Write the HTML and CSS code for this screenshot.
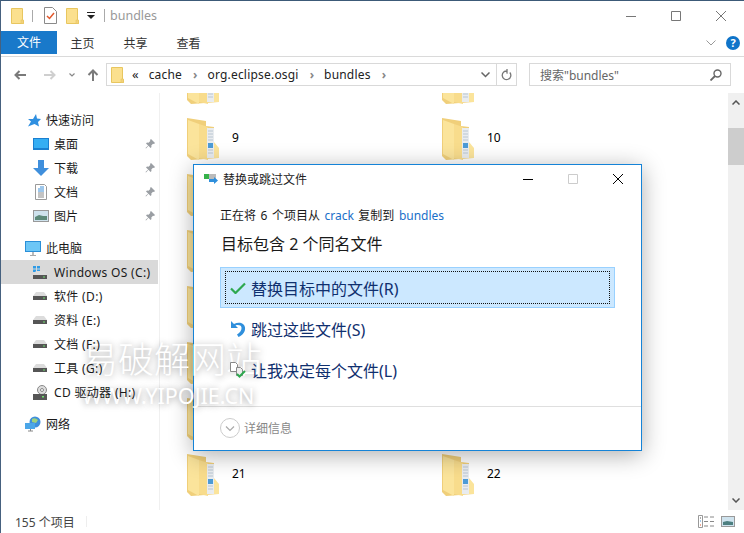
FILE: index.html
```html
<!doctype html>
<html lang="zh-CN">
<head>
	<meta charset="UTF-8">
	<title>bundles</title>
	<link rel="stylesheet" href="styles.css">
</head>
<body>
	<svg class="defs" width="0" height="0">
		<symbol id="folder" viewBox="0 0 32 42">
			<path d="M0 0 L19 3 L19 8 L27 9 L27 31 L32 37 L32 40 L4 42 L0 38Z" fill="#f0cf7a"/>
			<path d="M1 2 L12 6 L12 42 L1 36Z" fill="#fbe49b"/>
			<path d="M12 6 L21 9 L21 42 L12 40Z" fill="#f8dc8c"/>
			<rect x="20" y="10" width="7" height="30" fill="#e9ecef"/>
			<path d="M21 13h5M21 16h5M21 19h5M21 22h5M21 32h5M21 35h5" stroke="#b9c6d2" stroke-width="1"/>
			<rect x="21" y="25" width="5" height="5" fill="#4d9bd6"/>
			<path d="M27 24 L32 30 L32 40 L27 40Z" fill="#fbe49b"/>
		</symbol>
		<symbol id="tiny" viewBox="0 0 13 16">
			<path d="M.5 .5h11v12h1v3H.5z" fill="#fbe08e" stroke="#e8c65f"/>
			<path d="M10 12h2.500v3.500H10z" fill="#f3d27c" stroke="#e8c65f" stroke-width=".6"/>
		</symbol>
		<symbol id="drive" viewBox="0 0 14 8">
			<path d="M3 0h8l3 4v4H0V4z" fill="#dcdcdc"/>
			<path d="M0 4h14v4H0z" fill="#555"/>
			<rect x="10" y="5.500" width="2" height="1" fill="#6fe06f"/>
		</symbol>
		<symbol id="pin" viewBox="0 0 10 10">
			<path d="M6 0l4 4-1 1-1-.3L6.300 6.500 6.500 8 5.500 9 3.500 6.800 1 9.500 .5 9l2.700-2.500L1 4.500l1-1 1.500.2L5.300 2 5 1z" fill="#9a9ea3"/>
		</symbol>
	</svg>

	<div class="window">
		<header class="titlebar">
			<svg class="qa-folder"><use href="#tiny"/></svg>
			<span class="qa-sep"></span>
			<svg class="qa-props" viewBox="0 0 13 17" width="13" height="17">
				<path d="M.5 .5h8l4 4v12H.5z" fill="#fff" stroke="#8a8a8a"/>
				<path d="M3 9l2.500 2.500L10 6" fill="none" stroke="#e2572b" stroke-width="1.500"/>
			</svg>
			<svg class="qa-folder qa-folder-2"><use href="#tiny"/></svg>
			<svg class="qa-drop" viewBox="0 0 8 7" width="8" height="7">
				<path d="M0 0h8v1H0zM0 3h8L4 7z" fill="#222"/>
			</svg>
			<span class="qa-sep qa-sep-2"></span>
			<span class="title-text">bundles</span>
			<div class="win-buttons">
				<svg viewBox="0 0 10 10" width="10" height="10"><path d="M0 5.500h10" stroke="#777"/></svg>
				<svg viewBox="0 0 10 10" width="10" height="10"><path d="M.5 .5h9v9h-9z" fill="none" stroke="#777"/></svg>
				<svg viewBox="0 0 10 10" width="10" height="10"><path d="M0 0l10 10M10 0L0 10" stroke="#777"/></svg>
			</div>
		</header>

		<nav class="tabs">
			<span class="tab tab-file">文件</span>
			<span class="tab">主页</span>
			<span class="tab">共享</span>
			<span class="tab">查看</span>
			<svg class="ribbon-toggle" viewBox="0 0 10 6" width="10" height="6"><path d="M.5 .5L5 5 9.500 .5" fill="none" stroke="#999"/></svg>
			<span class="help">?</span>
		</nav>

		<div class="addressrow">
			<svg class="nav-arrow" viewBox="0 0 12 10" width="12" height="10"><path d="M12 5H2M5.500 1L1.500 5l4 4" fill="none" stroke="#7a7a7a" stroke-width="2"/></svg>
			<svg class="nav-arrow nav-forward" viewBox="0 0 12 10" width="12" height="10"><path d="M0 5h10M6.500 1l4 4-4 4" fill="none" stroke="#cfcfcf" stroke-width="2"/></svg>
			<svg class="nav-recent" viewBox="0 0 6 4" width="6" height="4"><path d="M.5 .5L3 3 5.500 .5" fill="none" stroke="#888" stroke-width="1.200"/></svg>
			<svg class="nav-up" viewBox="0 0 12 12" width="12" height="12"><path d="M6 12V2M1.500 6L6 1.500 10.500 6" fill="none" stroke="#7a7a7a" stroke-width="2"/></svg>
			<div class="addressbox">
				<svg class="addr-folder"><use href="#tiny"/></svg>
				<span class="crumb-more">«</span>
				<span class="crumb">cache</span><span class="crumb-sep">›</span>
				<span class="crumb">org.eclipse.osgi</span><span class="crumb-sep">›</span>
				<span class="crumb">bundles</span><span class="crumb-sep">›</span>
				<svg class="addr-drop" viewBox="0 0 9 6" width="9" height="6"><path d="M.5 .5L4.500 4.500 8.500 .5" fill="none" stroke="#666" stroke-width="1.500"/></svg>
				<span class="addr-refresh">
					<svg viewBox="0 0 11 12" width="11" height="12"><path d="M8.800 3.500a4.300 4.300 0 1 1-2.300-1.400M6 0v4h-.5" fill="none" stroke="#777" stroke-width="1.300"/></svg>
				</span>
			</div>
			<div class="searchbox">
				<span>搜索"bundles"</span>
				<svg viewBox="0 0 12 12" width="12" height="12"><circle cx="7.500" cy="4.500" r="3.500" fill="none" stroke="#666" stroke-width="1.400"/><path d="M5 7l-4.500 4.500" stroke="#666" stroke-width="1.800"/></svg>
			</div>
		</div>

		<main class="main">
			<aside class="sidebar">
				<div class="tree-row level-0">
					<svg class="star-icon" viewBox="0 0 14 14" width="14" height="14"><path d="M9 1l1 4.500 4 .5-3 3 1 4.500-4.500-2.500L1 13.500l3-5-3-2.500 5 0z" fill="#2f8fe0"/></svg>
					<span class="tree-label">快速访问</span>
				</div>
				<div class="tree-row level-1">
					<svg class="tree-icon" viewBox="0 0 16 12" width="16" height="12"><rect width="16" height="12" fill="#1a7fd0"/><rect x="1" y="1" width="14" height="9" fill="#35aef3"/></svg>
					<span class="tree-label">桌面</span><svg class="pin"><use href="#pin"/></svg>
				</div>
				<div class="tree-row level-1">
					<svg class="tree-icon" viewBox="0 0 16 16" width="16" height="16"><path d="M5 0h6v8h5l-8 8-8-8h5z" fill="#3f8fdc"/></svg>
					<span class="tree-label">下载</span><svg class="pin"><use href="#pin"/></svg>
				</div>
				<div class="tree-row level-1">
					<svg class="tree-icon" viewBox="0 0 16 16" width="16" height="16"><path d="M2.500 .5h9l2 2v13h-11z" fill="#fff" stroke="#9a9a9a"/><path d="M7 3h4M5 5h6M5 7h6" stroke="#3d8fd8"/><path d="M5 9h6M5 11h6M5 13h6" stroke="#888"/></svg>
					<span class="tree-label">文档</span><svg class="pin"><use href="#pin"/></svg>
				</div>
				<div class="tree-row level-1">
					<svg class="tree-icon" viewBox="0 0 16 12" width="16" height="12"><rect x=".5" y=".5" width="15" height="11" fill="#cfe3ee" stroke="#999"/><path d="M2 7l4-2 4 1 4 0v4H2z" fill="#5d8a7a"/></svg>
					<span class="tree-label">图片</span><svg class="pin"><use href="#pin"/></svg>
				</div>
				<div class="tree-row level-0 group-start">
					<svg class="tree-icon pc-icon" viewBox="0 0 16 15" width="16" height="15"><rect width="16" height="11" fill="#2a8fd8"/><rect x="1" y="1" width="14" height="9" fill="#6cc6f6"/><path d="M5 14h6v1H5z" fill="#aaa"/><path d="M7 11h2v3H7z" fill="#bbb"/></svg>
					<span class="tree-label">此电脑</span>
				</div>
				<div class="tree-row level-1 selected">
					<svg class="drive-c" viewBox="0 0 14 13" width="14" height="13"><path d="M0 0h3v2.500H0zM4 0h3v2.500H4zM0 3.500h3V6H0zM4 3.500h3V6H4z" fill="#2f9be6"/><use href="#drive" y="5" width="14" height="8"/></svg>
					<span class="tree-label drive-label">Windows OS (C:)</span>
				</div>
				<div class="tree-row level-1"><svg class="drive-icon"><use href="#drive"/></svg><span class="tree-label drive-label">软件 (D:)</span></div>
				<div class="tree-row level-1"><svg class="drive-icon"><use href="#drive"/></svg><span class="tree-label drive-label">资料 (E:)</span></div>
				<div class="tree-row level-1"><svg class="drive-icon"><use href="#drive"/></svg><span class="tree-label drive-label">文档 (F:)</span></div>
				<div class="tree-row level-1"><svg class="drive-icon"><use href="#drive"/></svg><span class="tree-label drive-label">工具 (G:)</span></div>
				<div class="tree-row level-1">
					<svg class="drive-cd" viewBox="0 0 14 15" width="14" height="15"><circle cx="9" cy="5" r="4.500" fill="#ddd" stroke="#888"/><circle cx="9" cy="5" r="1.500" fill="#fff" stroke="#888"/><path d="M0 9h14v6H0z" fill="#565656"/><rect x="9" y="11" width="2" height="1.500" fill="#6fe06f"/></svg>
					<span class="tree-label drive-label">CD 驱动器 (H:)</span>
				</div>
				<div class="tree-row level-0 group-start">
					<svg class="tree-icon" viewBox="0 0 16 16" width="16" height="16"><circle cx="10" cy="6" r="5.500" fill="#3f8fdc"/><path d="M7 3q3-2 6 1l-2 3-4-1z" fill="#9fd27e"/><rect y="7" width="10" height="6" fill="#4ba6e8"/><path d="M3 15h5M5.500 13v2" stroke="#888"/></svg>
					<span class="tree-label">网络</span>
				</div>
			</aside>

			<section class="files">
				<div class="file-grid">
					<div class="file"><svg class="big-folder"><use href="#folder"/></svg></div>
					<div class="file"><svg class="big-folder"><use href="#folder"/></svg></div>
					<div class="file"><svg class="big-folder"><use href="#folder"/></svg><span>9</span></div>
					<div class="file"><svg class="big-folder"><use href="#folder"/></svg><span>10</span></div>
					<div class="file"><svg class="big-folder"><use href="#folder"/></svg><span>11</span></div>
					<div class="file"><svg class="big-folder"><use href="#folder"/></svg><span>12</span></div>
					<div class="file"><svg class="big-folder"><use href="#folder"/></svg><span>13</span></div>
					<div class="file"><svg class="big-folder"><use href="#folder"/></svg><span>14</span></div>
					<div class="file"><svg class="big-folder"><use href="#folder"/></svg><span>15</span></div>
					<div class="file"><svg class="big-folder"><use href="#folder"/></svg><span>16</span></div>
					<div class="file"><svg class="big-folder"><use href="#folder"/></svg><span>17</span></div>
					<div class="file"><svg class="big-folder"><use href="#folder"/></svg><span>18</span></div>
					<div class="file"><svg class="big-folder"><use href="#folder"/></svg><span>19</span></div>
					<div class="file"><svg class="big-folder"><use href="#folder"/></svg><span>20</span></div>
					<div class="file"><svg class="big-folder"><use href="#folder"/></svg><span>21</span></div>
					<div class="file"><svg class="big-folder"><use href="#folder"/></svg><span>22</span></div>
				</div>
			</section>

			<div class="scrollbar">
				<svg viewBox="0 0 8 5" width="8" height="5"><path d="M.5 4.500L4 1l3.500 3.500" fill="none" stroke="#555" stroke-width="1.500"/></svg>
				<div class="scroll-track"><div class="scroll-thumb"></div></div>
				<svg viewBox="0 0 8 5" width="8" height="5"><path d="M.5 .5L4 4 7.500 .5" fill="none" stroke="#555" stroke-width="1.500"/></svg>
			</div>
		</main>

		<footer class="statusbar">
			<span class="status-count">155 个项目</span>
			<span class="status-sep"></span>
			<svg class="view-details" viewBox="0 0 16 13" width="16" height="13"><path d="M.5 .5h4v12h-4z" fill="#fff" stroke="#999"/><path d="M2 3h1" stroke="#555"/><path d="M2 6h1" stroke="#3d8fd8"/><path d="M2 10h1" stroke="#e2572b"/><path d="M6 2h4M12 2h4M6 6.500h4M12 6.500h4M6 11h4M12 11h4" stroke="#888"/></svg>
			<svg class="view-thumbs" viewBox="0 0 14 11" width="14" height="11"><rect x=".5" y=".5" width="13" height="10" fill="#cfe3ee" stroke="#999"/><path d="M2 6l4-1 6 1v3H2z" fill="#4d7f80"/></svg>
		</footer>
	</div>

	<div class="dialog">
		<div class="dialog-title">
			<svg viewBox="0 0 14 11" width="14" height="11"><rect y="1" width="5" height="5" fill="#35b24a"/><rect x="5" y="1" width="7" height="5" fill="#bbb"/><path d="M5 6h5V4l4 3.500-4 3.500V9H5z" fill="#2f8fdc"/></svg>
			<span class="dialog-caption">替换或跳过文件</span>
			<div class="dialog-buttons">
				<svg viewBox="0 0 10 10" width="10" height="10"><path d="M0 5.500h10" stroke="#000"/></svg>
				<svg viewBox="0 0 10 10" width="10" height="10"><path d="M.5 .5h9v9h-9z" fill="none" stroke="#ccc"/></svg>
				<svg viewBox="0 0 10 10" width="10" height="10"><path d="M0 0l10 10M10 0L0 10" stroke="#000"/></svg>
			</div>
		</div>
		<div class="dialog-body">
			<p class="copy-line">正在将 6 个项目从 <a class="link">crack</a> 复制到 <a class="link">bundles</a></p>
			<p class="dialog-heading">目标包含 2 个同名文件</p>
			<div class="option option-active">
				<div class="option-focus">
					<svg viewBox="0 0 16 12" width="16" height="12"><path d="M1 6.500L5.500 11 15 1.500" fill="none" stroke="#2fa84f" stroke-width="2.200"/></svg>
					<span>替换目标中的文件(R)</span>
				</div>
			</div>
			<div class="option">
				<div class="option-focus">
					<svg viewBox="0 0 16 16" width="16" height="16"><path d="M1 0v7h7L5.500 4.500C8 3.500 11 4 11.500 6.500 12 9 10 11.500 7 13.500l1.500 2.500c4.500-2 7-5.500 6.500-9.500C14.500 2 9 .5 4 3z" fill="#2f8fdc"/></svg>
					<span>跳过这些文件(S)</span>
				</div>
			</div>
			<div class="option">
				<div class="option-focus">
					<svg viewBox="0 0 16 16" width="16" height="16"><path d="M.5 .5h5l2 2v7h-7z" fill="#fff" stroke="#888"/><path d="M6.500 5.500h4l2 2v6h-6z" fill="#eee" stroke="#888"/><path d="M7 12l2.500 2.500L15 9" fill="none" stroke="#2fa84f" stroke-width="2"/></svg>
					<span>让我决定每个文件(L)</span>
				</div>
			</div>
		</div>
		<div class="dialog-footer">
			<svg viewBox="0 0 20 20" width="20" height="20"><circle cx="10" cy="10" r="9.500" fill="none" stroke="#ccc"/><path d="M6 8.500l4 4 4-4" fill="none" stroke="#aaa" stroke-width="1.200"/></svg>
			<span>详细信息</span>
		</div>
	</div>

	<div class="watermark">
		<div class="wm-cn">易破解网站</div>
		<div class="wm-en">WWW.YIPOJIE.CN</div>
	</div>
</body>
</html>
```

FILE: styles.css
```css
* {
	box-sizing: border-box;
}
html, body {
	margin: 0;
	height: 100%;
}
body {
	position: relative;
	width: 744px;
	height: 533px;
	overflow: hidden;
	background: #fff;
	font-family: "Noto Sans", "Noto Sans CJK SC", sans-serif;
	font-size: 12px;
	color: #1a1a1a;
}
svg {
	display: block;
	flex: none;
}
.defs {
	position: absolute;
}

/* explorer window */
.window {
	display: flex;
	flex-direction: column;
	height: 533px;
	border-top: 1px solid #3c5a78;
	border-left: 1px solid #46617f;
}
.titlebar {
	display: flex;
	align-items: center;
	height: 30px;
	padding: 0 0 1px 10px;
	flex: none;
}
.qa-folder {
	width: 13px;
	height: 16px;
}
.qa-folder-2 {
	margin-left: 9px;
}
.qa-sep {
	width: 1px;
	height: 12px;
	margin: 0 11px 0 8px;
	background: #aaa;
}
.qa-drop {
	margin-left: 8px;
}
.qa-sep-2 {
	height: 13px;
	margin: 0 5px 0 9px;
}
.title-text {
	color: #999;
	font-size: 12.5px;
}
.win-buttons {
	display: flex;
	gap: 35px;
	margin-left: auto;
	margin-right: 18px;
}

.tabs {
	display: flex;
	align-items: center;
	height: 26px;
	flex: none;
	border-bottom: 1px solid #dadada;
	padding-bottom: 2px;
}
.tab {
	width: 53px;
	height: 23px;
	line-height: 25px;
	text-align: center;
	color: #333;
}
.tab-file {
	width: 56px;
	margin-right: -1px;
	line-height: 24px;
	background: #1979ca;
	color: #fff;
}
.ribbon-toggle {
	margin-left: auto;
	margin-right: 10px;
}
.help {
	width: 14px;
	height: 14px;
	margin-right: 4px;
	border-radius: 50%;
	background: #0f74c9;
	color: #fff;
	font-size: 11px;
	font-weight: bold;
	line-height: 14px;
	text-align: center;
}

.addressrow {
	display: flex;
	align-items: center;
	height: 36px;
	flex: none;
	padding: 0 0 1px 13px;
}
.nav-forward {
	margin-left: 18px;
}
.nav-recent {
	margin-left: 13px;
}
.nav-up {
	margin-left: 12px;
	margin-right: 7px;
}
.addressbox {
	display: flex;
	align-items: center;
	width: 411px;
	height: 23px;
	padding-left: 4px;
	border: 1px solid #d9d9d9;
	color: #222;
}
.addr-folder {
	width: 13px;
	height: 16px;
}
.crumb {
	letter-spacing: .2px;
}
.crumb-more {
	margin: 0 10px 2px 8px;
	font-size: 13px;
}
.crumb-sep {
	margin: 0 10px 0 11px;
	color: #888;
	font-weight: bold;
}
.addr-drop {
	margin-left: auto;
	margin-right: 6px;
}
.addr-refresh {
	display: flex;
	align-items: center;
	justify-content: center;
	width: 20px;
	height: 21px;
	border-left: 1px solid #d9d9d9;
}
.searchbox {
	display: flex;
	align-items: center;
	justify-content: space-between;
	width: 202px;
	height: 23px;
	margin-left: 12px;
	padding: 0 8px 0 10px;
	border: 1px solid #d9d9d9;
	color: #666;
}

.main {
	display: flex;
	flex: 1;
	min-height: 0;
}
.sidebar {
	width: 159px;
	flex: none;
	padding-top: 15px;
	border-right: 1px solid #f0f0f0;
}
.tree-row {
	display: flex;
	align-items: center;
	height: 24px;
	width: 157px;
	white-space: nowrap;
}
.level-0 {
	padding-left: 24px;
	gap: 5px;
}
.level-1 {
	padding-left: 32px;
	gap: 5px;
}
.star-icon {
	margin-left: 2px;
}
.tree-label {
	position: relative;
	z-index: 2;
}
.drive-label {
	letter-spacing: .33px;
}
.group-start {
	margin-top: 8px;
}
.selected {
	background: #d9d9d9;
}
.drive-icon {
	width: 14px;
	height: 8px;
	margin-right: 2px;
}
.drive-c,
.drive-cd {
	margin-right: 2px;
}
.pin {
	width: 10px;
	height: 10px;
	margin-left: auto;
	margin-right: 3px;
}

.files {
	flex: 1;
	overflow: hidden;
}
.file-grid {
	display: grid;
	grid-template-columns: 255px 255px;
	grid-auto-rows: 56px;
	margin-top: -38px;
	padding-left: 27px;
}
.file {
	display: flex;
	align-items: center;
	gap: 13px;
	font-size: 12px;
	color: #000;
}
.file span {
	margin-bottom: 4px;
}
.big-folder {
	width: 32px;
	height: 42px;
}

.scrollbar {
	display: flex;
	flex-direction: column;
	align-items: center;
	justify-content: space-between;
	width: 16px;
	flex: none;
	padding: 7px 0;
	background: #f0f0f0;
}
.scroll-track {
	flex: 1;
	align-self: stretch;
	padding-top: 23px;
}
.scroll-thumb {
	height: 37px;
	background: #cdcdcd;
}

.statusbar {
	display: flex;
	align-items: center;
	height: 23px;
	flex: none;
	padding-left: 14px;
	color: #444;
}
.status-sep {
	width: 1px;
	height: 11px;
	margin-left: 11px;
	background: #eee;
}
.view-details {
	margin-left: auto;
}
.view-thumbs {
	margin: 0 9px 0 7px;
}

/* copy dialog */
.dialog {
	position: absolute;
	left: 193px;
	top: 164px;
	display: flex;
	flex-direction: column;
	width: 449px;
	height: 287px;
	border: 1px solid #1583d7;
	background: #fff;
	box-shadow: 0 4px 22px rgba(0, 0, 0, .32);
}
.dialog-title {
	display: flex;
	align-items: center;
	height: 29px;
	padding: 0 0 2px 10px;
	flex: none;
}
.dialog-caption {
	margin-left: 5px;
	color: #222;
}
.dialog-buttons {
	display: flex;
	gap: 35px;
	margin-left: auto;
	margin-right: 18px;
}
.dialog-body {
	flex: 1;
	padding: 12px 26px 0;
}
.copy-line {
	margin: 0;
	line-height: 20px;
	word-spacing: 1.4px;
}
.link {
	color: #1a6fc9;
}
.dialog-heading {
	margin: 8px 0 13px 1px;
	font-size: 16px;
	line-height: 20px;
}
.option {
	height: 41px;
	padding: 1px;
	border: 1px solid transparent;
	font-size: 16px;
	color: #10306f;
}
.option-active {
	border-color: #99d1ff;
	background: #cce8ff;
}
.option-focus {
	display: flex;
	align-items: center;
	gap: 5px;
	height: 33px;
	margin: 2px 3px;
	padding-left: 4px;
	border: 1px dotted transparent;
}
.option-focus span,
.option-focus svg {
	position: relative;
	z-index: 2;
}
.option-active .option-focus {
	border-color: #111;
}
.dialog-footer {
	display: flex;
	align-items: center;
	gap: 4px;
	height: 44px;
	flex: none;
	padding: 0 0 2px 26px;
	border-top: 1px solid #dfdfdf;
	color: #888;
}

/* site watermark, sits under the sidebar and option labels */
.watermark {
	position: absolute;
	z-index: 1;
	left: 82px;
	top: 333px;
	color: #fff;
	text-shadow: 0 1px 7px rgba(0, 0, 0, .4);
	pointer-events: none;
}
.wm-cn {
	font-family: "Noto Sans CJK SC", sans-serif;
	font-size: 36px;
	font-weight: 300;
	line-height: 48px;
}
.wm-en {
	font-size: 21.5px;
	line-height: 30px;
	white-space: nowrap;
}
```
